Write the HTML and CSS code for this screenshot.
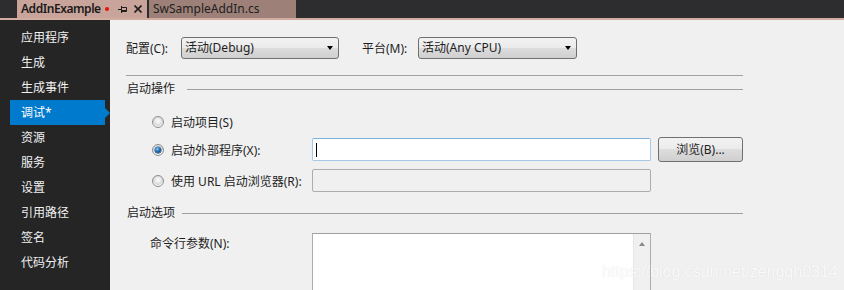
FILE: index.html
```html
<!DOCTYPE html>
<html lang="zh-CN">
<head>
<meta charset="utf-8">
<title>AddInExample</title>
<link rel="stylesheet" href="styles.css">
</head>
<body>
<div class="tabbar">
  <div class="tab tab-active">
    <span class="tab-title">AddInExample</span>
    <span class="mod-dot"></span>
    <svg class="pin" width="9" height="7" viewBox="0 0 9 7"><path d="M0 3.5H3M3.5 0V7M3.5 1.5H8.5V5.5H3.5" fill="none" stroke="#1e1e1e" stroke-width="1"/><path d="M3.5 4.5H8.5" stroke="#1e1e1e" stroke-width="1"/></svg>
    <svg class="close" width="8" height="8" viewBox="0 0 8 8"><path d="M0.5 0.5L7.5 7.5M7.5 0.5L0.5 7.5" stroke="#1e1e1e" stroke-width="1.6"/></svg>
  </div>
  <div class="tab-sep"></div>
  <div class="tab tab-other"><span class="tab-title-2">SwSampleAddIn.cs</span></div>
</div>
<div class="strip"></div>
<div class="content">
  <nav class="sidebar">
    <div class="nav-item">应用程序</div>
    <div class="nav-item">生成</div>
    <div class="nav-item">生成事件</div>
    <div class="nav-item nav-active">调试*</div>
    <div class="nav-item">资源</div>
    <div class="nav-item">服务</div>
    <div class="nav-item">设置</div>
    <div class="nav-item">引用路径</div>
    <div class="nav-item">签名</div>
    <div class="nav-item">代码分析</div>
  </nav>
  <main class="main">
    <div class="config-row">
      <span class="cfg-label">配置(C):</span>
      <div class="combo combo-1"><span>活动(Debug)</span><span class="arrow"></span></div>
      <span class="cfg-label cfg-label-2">平台(M):</span>
      <div class="combo combo-2"><span>活动(Any CPU)</span><span class="arrow"></span></div>
    </div>
    <div class="hr"></div>
    <div class="section-title"><span>启动操作</span><div class="line"></div></div>
    <div class="radio-group">
      <div class="radio-row row-1">
        <span class="radio"></span><span class="rlabel">启动项目(S)</span>
      </div>
      <div class="radio-row row-2">
        <span class="radio radio-checked"><span class="radio-dot"></span></span><span class="rlabel">启动外部程序(X):</span>
        <div class="textbox textbox-focus"><span class="caret"></span></div>
        <div class="button">浏览(B)...</div>
      </div>
      <div class="radio-row row-3">
        <span class="radio"></span><span class="rlabel">使用 URL 启动浏览器(R):</span>
        <div class="textbox textbox-disabled"></div>
      </div>
    </div>
    <div class="section-title section-2"><span>启动选项</span><div class="line"></div></div>
    <div class="args-row">
      <span class="args-label">命令行参数(N):</span>
      <div class="textarea">
        <div class="ta-body"></div>
        <div class="scrollbar"><span class="up-arrow"></span></div>
      </div>
    </div>
  </main>
</div>
<div class="watermark">https://blog.csdn.net/zengqh0314</div>
</body>
</html>
```
FILE: styles.css
```css
html, body {
  margin: 0;
  padding: 0;
}
body {
  width: 844px;
  height: 290px;
  overflow: hidden;
  background: #f0f0f0;
  font-family: "Noto Sans", "Noto Sans CJK SC", sans-serif;
  font-size: 12px;
  color: #1e1e1e;
  position: relative;
}
.tabbar {
  height: 18px;
  background: #2d2d30;
  display: flex;
  padding-left: 17px;
}
.tab {
  height: 18px;
  display: flex;
  align-items: center;
  box-sizing: border-box;
  padding-left: 4px;
  line-height: 18px;
}
.tab-active {
  width: 130px;
  background: #c9a49b;
}
.tab-title {
  width: 80px;
  flex: none;
  white-space: nowrap;
  font-weight: 600;
  color: #1a1a1a;
  letter-spacing: -0.45px;
}
.mod-dot {
  width: 4px;
  height: 4px;
  flex: none;
  border-radius: 50%;
  background: #e51400;
  margin-left: 4px;
}
.pin {
  flex: none;
  margin-left: 9px;
}
.close {
  flex: none;
  margin-left: 7px;
}
.tab-sep {
  width: 2px;
  background: #2d2d30;
}
.tab-other {
  width: 147px;
  background: #9d8179;
}
.tab-title-2 {
  color: #1e1e1e;
}
.strip {
  height: 2px;
  background: #d2aba1;
}
.content {
  display: flex;
  height: 270px;
}
.sidebar {
  width: 110px;
  flex: none;
  background: #252526;
  padding-top: 5px;
  box-sizing: border-box;
}
.nav-item {
  height: 25px;
  line-height: 25px;
  margin-left: 10px;
  width: 95px;
  padding-left: 11px;
  box-sizing: border-box;
  color: #f1f1f1;
  position: relative;
}
.nav-active {
  background: #007acc;
  color: #ffffff;
}
.nav-active::after {
  content: "";
  position: absolute;
  left: 95px;
  top: 8px;
  border-top: 5px solid transparent;
  border-bottom: 5px solid transparent;
  border-left: 5px solid #007acc;
}
.main {
  flex: 1;
  padding: 17px 101px 0 16px;
  box-sizing: border-box;
  overflow: hidden;
}
.config-row {
  display: flex;
  align-items: center;
  height: 22px;
}
.cfg-label {
  width: 55px;
  flex: none;
}
.cfg-label-2 {
  margin-left: 23px;
  width: 56px;
}
.combo {
  height: 22px;
  box-sizing: border-box;
  border: 1px solid #707070;
  border-radius: 3px;
  background: linear-gradient(#f2f2f2 0%, #ebebeb 50%, #dddddd 50%, #cfcfcf 100%);
  display: flex;
  align-items: center;
  justify-content: space-between;
  padding: 0 4px 0 3px;
  line-height: 18px;
}
.combo-1 { width: 158px; }
.combo-2 { width: 159px; }
.arrow {
  width: 0;
  height: 0;
  border-left: 3.5px solid transparent;
  border-right: 3.5px solid transparent;
  border-top: 4px solid #000;
  margin-right: 1px;
}
.hr {
  height: 1px;
  background: #a0a0a0;
  margin-top: 16px;
}
.section-title {
  display: flex;
  align-items: center;
  height: 16px;
  margin-top: 5px;
  line-height: 16px;
  padding-left: 1px;
}
.section-title .line {
  flex: 1;
  height: 1px;
  background: #a0a0a0;
  margin-left: 12px;
}
.section-2 {
  margin-top: 13px;
}
.section-2 .line {
  margin-left: 7px;
}
.radio-group {
  margin-top: 13px;
  padding-left: 26px;
}
.radio-row {
  display: flex;
  align-items: center;
}
.row-1 { height: 23px; }
.row-2 { height: 25px; margin-top: 4px; }
.row-3 { height: 23px; margin-top: 7px; }
.radio {
  width: 12px;
  height: 12px;
  flex: none;
  box-sizing: border-box;
  border-radius: 50%;
  border: 1px solid #8f8f8f;
  background: radial-gradient(circle at 50% 40%, #fafafa 0, #ececec 2.5px, #d4d4d4 4.5px, #f4f4f4 5px);
  display: flex;
  align-items: center;
  justify-content: center;
}
.radio-dot {
  width: 6px;
  height: 6px;
  border-radius: 50%;
  background: radial-gradient(circle at 40% 35%, #9fd3f7 0, #3b8fd1 1.5px, #165a94 3px);
  box-shadow: 0 0 0 0.5px #1f4e79;
}
.rlabel {
  margin-left: 7px;
  width: 141px;
  flex: none;
  white-space: nowrap;
}
.textbox {
  width: 339px;
  height: 23px;
  box-sizing: border-box;
  border-radius: 2px;
  display: flex;
  align-items: center;
}
.textbox-focus {
  background: #ffffff;
  border: 1px solid #a3c8e8;
  border-top-color: #7fb1dc;
}
.caret {
  width: 1px;
  height: 14px;
  background: #000;
  margin-left: 3px;
}
.textbox-disabled {
  background: #f0f0f0;
  border: 1px solid #adadad;
}
.button {
  width: 85px;
  height: 25px;
  margin-left: 7px;
  box-sizing: border-box;
  border: 1px solid #707070;
  border-radius: 3px;
  background: linear-gradient(#f2f2f2 0%, #ebebeb 50%, #dddddd 50%, #cfcfcf 100%);
  display: flex;
  align-items: center;
  justify-content: center;
  line-height: 18px;
}
.args-row {
  display: flex;
  margin-top: 12px;
  padding-left: 24px;
}
.args-label {
  width: 162px;
  flex: none;
  padding-top: 3px;
  line-height: 16px;
}
.textarea {
  width: 339px;
  height: 80px;
  box-sizing: border-box;
  border: 1px solid #adadad;
  border-top-color: #a0a0a0;
  background: #ffffff;
  display: flex;
}
.ta-body {
  flex: 1;
}
.scrollbar {
  width: 17px;
  background: #f0f0f0;
  border-left: 1px solid #e6e6e6;
  box-sizing: border-box;
  display: flex;
  justify-content: center;
  padding-top: 8px;
}
.up-arrow {
  width: 0;
  height: 0;
  border-left: 3.5px solid transparent;
  border-right: 3.5px solid transparent;
  border-bottom: 4px solid #8a8a8a;
}
.watermark {
  position: absolute;
  left: 602px;
  top: 262px;
  font-family: "Liberation Sans", Arial, sans-serif;
  font-size: 16px;
  line-height: 20px;
  color: rgba(255, 255, 255, 0.9);
  text-shadow: 0 0 1px rgba(0, 0, 0, 0.12);
  white-space: nowrap;
}
```
